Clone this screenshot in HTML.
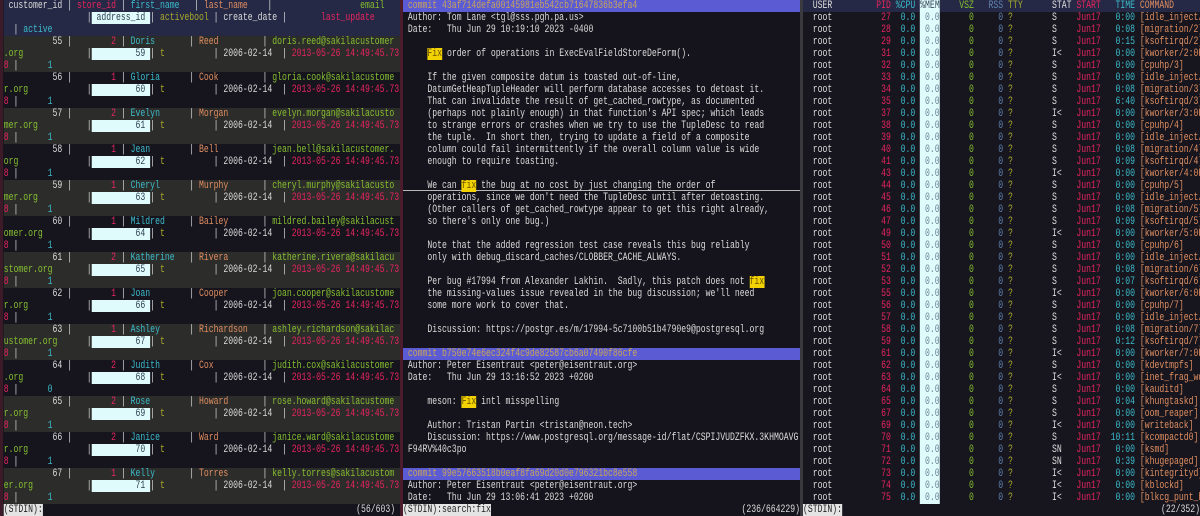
<!DOCTYPE html>
<html><head><meta charset="utf-8">
<style>
*{margin:0;padding:0;box-sizing:border-box}
html,body{width:1200px;height:516px;overflow:hidden;background:#16151e}
body{font-family:"Liberation Mono",monospace;font-size:11px;color:#dcdcdc;position:relative}
.pane{position:absolute;top:0;height:516px;overflow:hidden}
.in{transform:scaleX(0.7394);transform-origin:0 0;}
.l{height:12px;line-height:12px;white-space:pre;}
.r{color:#e8245e}.c{color:#3cbccc}.o{color:#e08e60}.g{color:#86c030}.y{color:#a8aa2a}
.bx{background:#e0fbfc;color:#2c3e50}
.hd{background:#252945}
.odd{background:#2c2c2a}
.st{display:flex;justify-content:space-between}
.sb{background:#e4e4e4;color:#222}
.cm{background:#5b5bd4;color:#c9a55a}
.fx{background:#f2d200;color:#6a5400}
.rs{color:#6084b0}
.mem{background:#e0fbfc;color:#6a8494}
</style></head><body>
<div style="position:absolute;left:0;top:0;width:3px;height:516px;background:#3d1a28"></div>
<div style="position:absolute;left:400px;top:0;width:3px;height:516px;background:#4a1c2c"></div>
<div style="position:absolute;left:800px;top:0;width:3px;height:516px;background:#3a3a3e"></div>

<!-- LEFT -->
<div class="pane" style="left:3px;width:397px">
<div class="in" style="width:537px;padding-left:1px">
<div class="hd">
<div class="l"> customer_id | <span class="r">store_id</span> | <span class="c">first_name</span>   | <span class="o">last_name</span>    |                  <span class="g">email</span></div>
<div class="l">                 |<span class="bx"> address_id </span>|<span class="y"> activebool </span>| create_date |       <span class="r">last_update</span></div>
<div class="l">  | <span class="c">active</span></div>
</div>
<div class="odd"><div class="l">          55 | <span class="r">       2</span> | <span class="c">Doris       </span>| <span class="o">Reed         </span>| <span class="g">doris.reed@sakilacustomer</span></div><div class="l"><span class="g">.org</span>             |<span class="bx">         59 </span>| <span class="y">t</span>          | 2006-02-14  | <span class="r">2013-05-26 14:49:45.73</span></div><div class="l"><span class="r">8</span> |      <span class="c">1</span></div></div>
<div><div class="l">          56 | <span class="r">       1</span> | <span class="c">Gloria      </span>| <span class="o">Cook         </span>| <span class="g">gloria.cook@sakilacustome</span></div><div class="l"><span class="g">r.org</span>            |<span class="bx">         60 </span>| <span class="y">t</span>          | 2006-02-14  | <span class="r">2013-05-26 14:49:45.73</span></div><div class="l"><span class="r">8</span> |      <span class="c">1</span></div></div>
<div class="odd"><div class="l">          57 | <span class="r">       2</span> | <span class="c">Evelyn      </span>| <span class="o">Morgan       </span>| <span class="g">evelyn.morgan@sakilacusto</span></div><div class="l"><span class="g">mer.org</span>          |<span class="bx">         61 </span>| <span class="y">t</span>          | 2006-02-14  | <span class="r">2013-05-26 14:49:45.73</span></div><div class="l"><span class="r">8</span> |      <span class="c">1</span></div></div>
<div><div class="l">          58 | <span class="r">       1</span> | <span class="c">Jean        </span>| <span class="o">Bell         </span>| <span class="g">jean.bell@sakilacustomer.</span></div><div class="l"><span class="g">org</span>              |<span class="bx">         62 </span>| <span class="y">t</span>          | 2006-02-14  | <span class="r">2013-05-26 14:49:45.73</span></div><div class="l"><span class="r">8</span> |      <span class="c">1</span></div></div>
<div class="odd"><div class="l">          59 | <span class="r">       1</span> | <span class="c">Cheryl      </span>| <span class="o">Murphy       </span>| <span class="g">cheryl.murphy@sakilacusto</span></div><div class="l"><span class="g">mer.org</span>          |<span class="bx">         63 </span>| <span class="y">t</span>          | 2006-02-14  | <span class="r">2013-05-26 14:49:45.73</span></div><div class="l"><span class="r">8</span> |      <span class="c">1</span></div></div>
<div><div class="l">          60 | <span class="r">       1</span> | <span class="c">Mildred     </span>| <span class="o">Bailey       </span>| <span class="g">mildred.bailey@sakilacust</span></div><div class="l"><span class="g">omer.org</span>         |<span class="bx">         64 </span>| <span class="y">t</span>          | 2006-02-14  | <span class="r">2013-05-26 14:49:45.73</span></div><div class="l"><span class="r">8</span> |      <span class="c">1</span></div></div>
<div class="odd"><div class="l">          61 | <span class="r">       2</span> | <span class="c">Katherine   </span>| <span class="o">Rivera       </span>| <span class="g">katherine.rivera@sakilacu</span></div><div class="l"><span class="g">stomer.org</span>       |<span class="bx">         65 </span>| <span class="y">t</span>          | 2006-02-14  | <span class="r">2013-05-26 14:49:45.73</span></div><div class="l"><span class="r">8</span> |      <span class="c">1</span></div></div>
<div><div class="l">          62 | <span class="r">       1</span> | <span class="c">Joan        </span>| <span class="o">Cooper       </span>| <span class="g">joan.cooper@sakilacustome</span></div><div class="l"><span class="g">r.org</span>            |<span class="bx">         66 </span>| <span class="y">t</span>          | 2006-02-14  | <span class="r">2013-05-26 14:49:45.73</span></div><div class="l"><span class="r">8</span> |      <span class="c">1</span></div></div>
<div class="odd"><div class="l">          63 | <span class="r">       1</span> | <span class="c">Ashley      </span>| <span class="o">Richardson   </span>| <span class="g">ashley.richardson@sakilac</span></div><div class="l"><span class="g">ustomer.org</span>      |<span class="bx">         67 </span>| <span class="y">t</span>          | 2006-02-14  | <span class="r">2013-05-26 14:49:45.73</span></div><div class="l"><span class="r">8</span> |      <span class="c">1</span></div></div>
<div><div class="l">          64 | <span class="r">       2</span> | <span class="c">Judith      </span>| <span class="o">Cox          </span>| <span class="g">judith.cox@sakilacustomer</span></div><div class="l"><span class="g">.org</span>             |<span class="bx">         68 </span>| <span class="y">t</span>          | 2006-02-14  | <span class="r">2013-05-26 14:49:45.73</span></div><div class="l"><span class="r">8</span> |      <span class="c">0</span></div></div>
<div class="odd"><div class="l">          65 | <span class="r">       2</span> | <span class="c">Rose        </span>| <span class="o">Howard       </span>| <span class="g">rose.howard@sakilacustome</span></div><div class="l"><span class="g">r.org</span>            |<span class="bx">         69 </span>| <span class="y">t</span>          | 2006-02-14  | <span class="r">2013-05-26 14:49:45.73</span></div><div class="l"><span class="r">8</span> |      <span class="c">1</span></div></div>
<div><div class="l">          66 | <span class="r">       2</span> | <span class="c">Janice      </span>| <span class="o">Ward         </span>| <span class="g">janice.ward@sakilacustome</span></div><div class="l"><span class="g">r.org</span>            |<span class="bx">         70 </span>| <span class="y">t</span>          | 2006-02-14  | <span class="r">2013-05-26 14:49:45.73</span></div><div class="l"><span class="r">8</span> |      <span class="c">1</span></div></div>
<div class="odd"><div class="l">          67 | <span class="r">       1</span> | <span class="c">Kelly       </span>| <span class="o">Torres       </span>| <span class="g">kelly.torres@sakilacustom</span></div><div class="l"><span class="g">er.org</span>           |<span class="bx">         71 </span>| <span class="y">t</span>          | 2006-02-14  | <span class="r">2013-05-26 14:49:45.73</span></div><div class="l"><span class="r">8</span> |      <span class="c">1</span></div></div>
<div class="l st"><span class="sb">(STDIN):</span><span>(56/603) </span></div>
</div></div>

<!-- MIDDLE -->
<div class="pane" style="left:403px;width:397px;background:#15141c">
<div style="position:absolute;left:0;top:190px;width:397px;height:1px;background:#b8b8b8"></div>
<div class="in" style="width:537px">
<div class="l cm"> commit 43af714defa00145981eb542cb71647836b3efa4</div>
<div class="l"> Author: Tom Lane &lt;tgl@sss.pgh.pa.us&gt;</div>
<div class="l"> Date:   Thu Jun 29 10:19:10 2023 -0400</div>
<div class="l"> </div>
<div class="l">     <span class="fx">Fix</span> order of operations in ExecEvalFieldStoreDeForm().</div>
<div class="l"> </div>
<div class="l">     If the given composite datum is toasted out-of-line,</div>
<div class="l">     DatumGetHeapTupleHeader will perform database accesses to detoast it.</div>
<div class="l">     That can invalidate the result of get_cached_rowtype, as documented</div>
<div class="l">     (perhaps not plainly enough) in that function's API spec; which leads</div>
<div class="l">     to strange errors or crashes when we try to use the TupleDesc to read</div>
<div class="l">     the tuple.  In short then, trying to update a field of a composite</div>
<div class="l">     column could fail intermittently if the overall column value is wide</div>
<div class="l">     enough to require toasting.</div>
<div class="l"> </div>
<div class="l">     We can <span class="fx">fix</span> the bug at no cost by just changing the order of</div>
<div class="l">     operations, since we don't need the TupleDesc until after detoasting.</div>
<div class="l">     (Other callers of get_cached_rowtype appear to get this right already,</div>
<div class="l">     so there's only one bug.)</div>
<div class="l"> </div>
<div class="l">     Note that the added regression test case reveals this bug reliably</div>
<div class="l">     only with debug_discard_caches/CLOBBER_CACHE_ALWAYS.</div>
<div class="l"> </div>
<div class="l">     Per bug #17994 from Alexander Lakhin.  Sadly, this patch does not <span class="fx">fix</span></div>
<div class="l">     the missing-values issue revealed in the bug discussion; we'll need</div>
<div class="l">     some more work to cover that.</div>
<div class="l"> </div>
<div class="l">     Discussion: https://postgr.es/m/17994-5c7100b51b4790e9@postgresql.org</div>
<div class="l"> </div>
<div class="l cm"> commit b750e74e6ec324f4c9de82587cb6a07490f86cfe</div>
<div class="l"> Author: Peter Eisentraut &lt;peter@eisentraut.org&gt;</div>
<div class="l"> Date:   Thu Jun 29 13:16:52 2023 +0200</div>
<div class="l"> </div>
<div class="l">     meson: <span class="fx">Fix</span> intl misspelling</div>
<div class="l"> </div>
<div class="l">     Author: Tristan Partin &lt;tristan@neon.tech&gt;</div>
<div class="l">     Discussion: https://www.postgresql.org/message-id/flat/CSPIJVUDZFKX.3KHMOAVG</div>
<div class="l"> F94RV%40c3po</div>
<div class="l"> </div>
<div class="l cm"> commit 99e57663518b0eaf8fa69d20d0e796321bc8e558</div>
<div class="l"> Author: Peter Eisentraut &lt;peter@eisentraut.org&gt;</div>
<div class="l"> Date:   Thu Jun 29 13:06:41 2023 +0200</div>
<div class="l st"><span class="sb">(STDIN):search:fix</span><span>(236/664229)</span></div>
</div></div>

<!-- RIGHT -->
<div class="pane" style="left:803px;width:397px;background:#17161f">
<div class="in" style="width:537px">
<div class="l hd">  USER         <span class="r">PID</span> <span class="c">%CPU</span> <span class="mem" style="color:#3a4a5a">%MEM</span>    <span class="g">VSZ</span>   <span class="rs">RSS</span> <span class="y">TTY</span>      STAT <span class="r">START</span>   <span class="c">TIME</span> <span class="o">COMMAND</span></div>
<div id="rows"></div>
<div class="l st"><span class="sb">(STDIN):</span><span>(22/352)</span></div>
</div></div>
<script>
var d=[[27,"S","0:00","[idle_inject/2]"],[28,"S","0:08","[migration/2]"],[29,"S","0:15","[ksoftirqd/2]"],[31,"I<","0:00","[kworker/2:0H-events_highpri]"],[32,"S","0:00","[cpuhp/3]"],[33,"S","0:00","[idle_inject/3]"],[34,"S","0:08","[migration/3]"],[35,"S","6:40","[ksoftirqd/3]"],[37,"I<","0:00","[kworker/3:0H-events_highpri]"],[38,"S","0:00","[cpuhp/4]"],[39,"S","0:00","[idle_inject/4]"],[40,"S","0:08","[migration/4]"],[41,"S","0:09","[ksoftirqd/4]"],[43,"I<","0:00","[kworker/4:0H-events_highpri]"],[44,"S","0:00","[cpuhp/5]"],[45,"S","0:00","[idle_inject/5]"],[46,"S","0:08","[migration/5]"],[47,"S","0:09","[ksoftirqd/5]"],[49,"I<","0:00","[kworker/5:0H-events_highpri]"],[50,"S","0:00","[cpuhp/6]"],[51,"S","0:00","[idle_inject/6]"],[52,"S","0:08","[migration/6]"],[53,"S","0:07","[ksoftirqd/6]"],[55,"I<","0:00","[kworker/6:0H-events_highpri]"],[56,"S","0:00","[cpuhp/7]"],[57,"S","0:00","[idle_inject/7]"],[58,"S","0:08","[migration/7]"],[59,"S","0:12","[ksoftirqd/7]"],[61,"I<","0:00","[kworker/7:0H-events_highpri]"],[62,"S","0:00","[kdevtmpfs]"],[63,"I<","0:00","[inet_frag_wq]"],[64,"S","0:00","[kauditd]"],[65,"S","0:04","[khungtaskd]"],[67,"S","0:00","[oom_reaper]"],[69,"I<","0:00","[writeback]"],[70,"S","10:11","[kcompactd0]"],[71,"SN","0:00","[ksmd]"],[72,"SN","0:39","[khugepaged]"],[73,"I<","0:00","[kintegrityd]"],[74,"I<","0:00","[kblockd]"],[75,"I<","0:00","[blkcg_punt_bio]"]];
function p(s,n){s=String(s);while(s.length<n)s=" "+s;return s}
function q(s,n){while(s.length<n)s+=" ";return s}
var h="";
d.forEach(function(r){
h+='<div class="l">  root      <span class="r">'+p(r[0],6)+'</span>  <span class="c">0.0</span> <span class="mem"> 0.0</span>      <span class="g">0</span>     <span class="rs">0</span> <span class="y">?</span>        '+q(r[1],4).replace("<","&lt;")+' <span class="r">Jun17</span> <span class="c">'+p(r[2],6)+'</span> <span class="o">'+r[3]+'</span></div>';
});
document.getElementById("rows").innerHTML=h;
</script>
</body></html>
